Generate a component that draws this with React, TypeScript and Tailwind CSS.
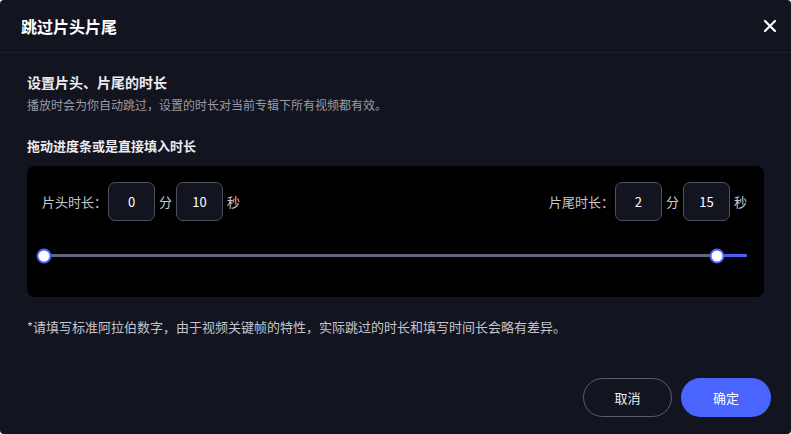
import React from 'react';

const font = { fontFamily: '"Noto Sans CJK SC", "Noto Sans", sans-serif' };

function TimeBox({ value }: { value: string }) {
  return (
    <div className="w-[47px] h-[39px] rounded-[7px] border border-[#4e505b] bg-[#12141f] flex items-center justify-center text-[13px] text-white">
      {value}
    </div>
  );
}

function TimeField({ label, min, sec }: { label: string; min: string; sec: string }) {
  return (
    <div className="flex items-center text-[13px] text-[#c9c9cf]">
      <span className="mr-[1px]">{label}</span>
      <TimeBox value={min} />
      <span className="mx-[4px]">分</span>
      <TimeBox value={sec} />
      <span className="ml-[4px]">秒</span>
    </div>
  );
}

export default function App() {
  const start = 0;
  const end = 0.957;

  return (
    <div className="w-[791px] h-[434px] bg-white" style={font}>
      <div className="h-full bg-[#12141f] rounded-[4px] flex flex-col">
        {/* header */}
        <div className="h-[53px] px-[21px] flex items-center justify-between border-b border-[#1d1f2b]">
          <h1 className="text-[16px] font-bold text-white">跳过片头片尾</h1>
          <button className="w-[14px] h-[14px] mr-[-7px] text-white">
            <svg viewBox="0 0 14 14" width="14" height="14">
              <path d="M2 2 L12 12 M12 2 L2 12" stroke="currentColor" strokeWidth="2.2" strokeLinecap="round" />
            </svg>
          </button>
        </div>

        {/* body */}
        <div className="px-[27px] pt-[19px]">
          <div className="text-[14px] leading-[21px] font-bold text-[#ececf0]">设置片头、片尾的时长</div>
          <div className="mt-[3px] text-[12px] leading-[18px] text-[#9a9ba3]">
            播放时会为你自动跳过，设置的时长对当前专辑下所有视频都有效。
          </div>
          <div className="mt-[22px] text-[13px] leading-[20px] font-bold text-[#ececf0]">拖动进度条或是直接填入时长</div>

          <div className="mt-[10px] h-[131px] rounded-[8px] bg-black pl-[15px] pr-[17px] pt-[16px]">
            <div className="flex items-center justify-between">
              <TimeField label="片头时长：" min="0" sec="10" />
              <TimeField label="片尾时长：" min="2" sec="15" />
            </div>

            {/* slider */}
            <div className="relative mt-[33px] ml-[2px] h-[3px] bg-[#65647a] rounded-full">
              <div
                className="absolute top-0 h-[3px] bg-[#4a60ff] rounded-full"
                style={{ left: `${end * 100}%`, right: 0 }}
              />
              <div
                className="absolute top-1/2 w-[15px] h-[15px] -translate-x-1/2 -translate-y-1/2 rounded-full bg-white border-2 border-[#4a60ff]"
                style={{ left: `${start * 100}%` }}
              />
              <div
                className="absolute top-1/2 w-[15px] h-[15px] -translate-x-1/2 -translate-y-1/2 rounded-full bg-white border-2 border-[#4a60ff]"
                style={{ left: `${end * 100}%` }}
              />
            </div>
          </div>

          <div className="mt-[20px] text-[13px] leading-[19px] text-[#c4c5cc]">
            *请填写标准阿拉伯数字，由于视频关键帧的特性，实际跳过的时长和填写时间长会略有差异。
          </div>
        </div>

        {/* footer */}
        <div className="mt-auto mb-[17px] px-[20px] flex justify-end gap-[9px]">
          <button className="w-[89px] h-[39px] rounded-full border border-[#5a5c66] text-[13px] text-[#ececf0]">
            取消
          </button>
          <button className="w-[90px] h-[39px] rounded-full bg-[#4a64ff] text-[13px] text-white">
            确定
          </button>
        </div>
      </div>
    </div>
  );
}
